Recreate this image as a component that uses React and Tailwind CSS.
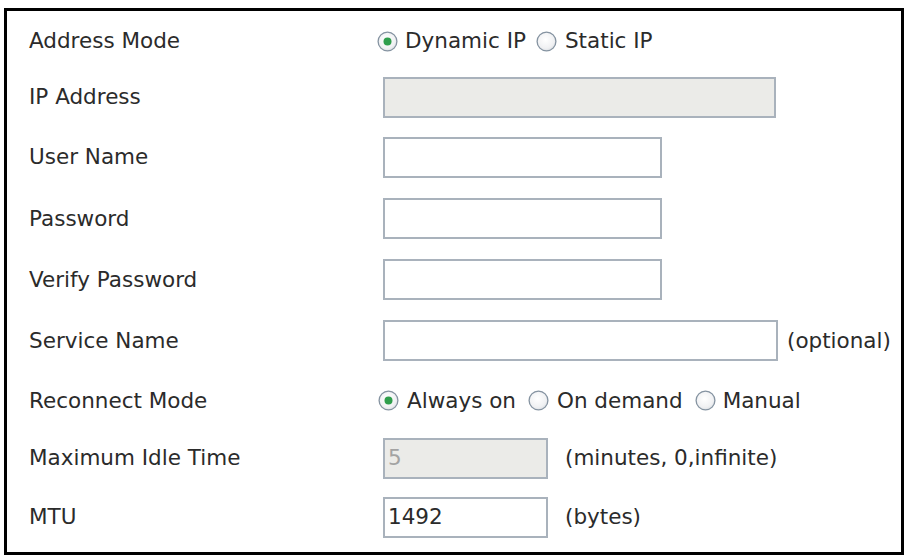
import React from 'react';

const Radio = ({ checked, id }) => (
  <svg width="21" height="21" viewBox="0 0 21 21" className="shrink-0">
    <defs>
      <radialGradient id={id} cx="45%" cy="40%" r="65%">
        <stop offset="0" stopColor="#ffffff" />
        <stop offset="0.7" stopColor="#f0f1f3" />
        <stop offset="1" stopColor="#d8dce0" />
      </radialGradient>
    </defs>
    <circle cx="10.5" cy="10.5" r="9.4" fill={`url(#${id})`} stroke="#8593a1" strokeWidth="1.3" />
    {checked && <circle cx="10.5" cy="10.5" r="4" fill="#2f9e4c" />}
  </svg>
);

const Row = ({ h, label, children }) => (
  <div className={`flex items-center ${h}`}>
    <div className="w-[354px] shrink-0">{label}</div>
    {children}
  </div>
);

const Input = ({ w, value = '', disabled }) => (
  <div
    className={`h-[41px] ${w} border-2 border-[#a9b2bc] flex items-center pl-[3px] ${
      disabled ? 'bg-[#ebebe8] text-[#a3a3a3]' : 'bg-white text-[#2b2b2b]'
    }`}
  >
    {value}
  </div>
);

export default function App() {
  return (
    <div className="bg-white w-[909px] h-[557px] pt-[8px] pl-[4px]">
      <div className="w-[900px] h-[547px] border-[3px] border-black pl-[22px] pt-[3px] font-['DejaVu_Sans',sans-serif] text-[21.5px] text-[#2b2b2b] leading-none">
        <Row h="h-[54px]" label="Address Mode">
          <div className="flex items-center -ml-[6px]">
            <Radio checked id="r1" />
            <span className="ml-[7px] mr-[10px]">Dynamic IP</span>
            <Radio id="r2" />
            <span className="ml-[8px]">Static IP</span>
          </div>
        </Row>
        <Row h="h-[58px]" label="IP Address">
          <Input w="w-[393px]" disabled />
        </Row>
        <Row h="h-[62px]" label="User Name">
          <Input w="w-[279px]" />
        </Row>
        <Row h="h-[61px]" label="Password">
          <Input w="w-[279px]" />
        </Row>
        <Row h="h-[61px]" label="Verify Password">
          <Input w="w-[279px]" />
        </Row>
        <Row h="h-[61px]" label="Service Name">
          <Input w="w-[395px]" />
          <span className="ml-[9px]">(optional)</span>
        </Row>
        <Row h="h-[59px]" label="Reconnect Mode">
          <div className="flex items-center -ml-[5px]">
            <Radio checked id="r3" />
            <span className="ml-[8px] mr-[12px]">Always on</span>
            <Radio id="r4" />
            <span className="ml-[8px] mr-[12px]">On demand</span>
            <Radio id="r5" />
            <span className="ml-[7px]">Manual</span>
          </div>
        </Row>
        <Row h="h-[56px]" label="Maximum Idle Time">
          <Input w="w-[165px]" value="5" disabled />
          <span className="ml-[17px]">(minutes, 0,infinite)</span>
        </Row>
        <Row h="h-[62px]" label="MTU">
          <Input w="w-[165px]" value="1492" />
          <span className="ml-[17px]">(bytes)</span>
        </Row>
      </div>
    </div>
  );
}
